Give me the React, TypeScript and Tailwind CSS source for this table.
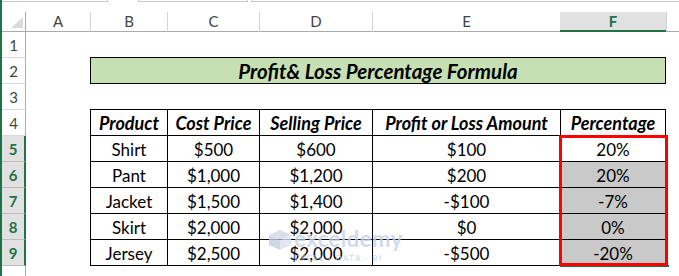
import React from 'react';

const cols = [
  { k: 'A', w: 64 },
  { k: 'B', w: 77 },
  { k: 'C', w: 92 },
  { k: 'D', w: 113 },
  { k: 'E', w: 188 },
  { k: 'F', w: 106 },
];

const widths = ['w-[77px]', 'w-[92px]', 'w-[113px]', 'w-[188px]', 'w-[106px]'];

const header = ['Product', 'Cost Price', 'Selling Price', 'Profit or Loss Amount', 'Percentage'];

const rows = [
  ['Shirt', '$500', '$600', '$100', '20%'],
  ['Pant', '$1,000', '$1,200', '$200', '20%'],
  ['Jacket', '$1,500', '$1,400', '-$100', '-7%'],
  ['Skirt', '$2,000', '$2,000', '$0', '0%'],
  ['Jersey', '$2,500', '$2,000', '-$500', '-20%'],
];

function RowHead({ n, active }: { n: number; active?: boolean }) {
  return active ? (
    <div className="w-[24px] h-full shrink-0 flex items-center justify-center bg-[#e1e1e1] border-b border-b-[#bdbdbd] border-r-2 border-r-[#217346] text-[#217346] font-bold text-[15px] pt-[2px]">
      {n}
    </div>
  ) : (
    <div className="w-[24px] h-full shrink-0 flex items-center justify-center border-b border-b-[#d9d9d9] border-r border-r-[#ababab] text-[#444] text-[15px] pt-[2px]">
      {n}
    </div>
  );
}

function Watermark() {
  return (
    <div className="absolute left-[268px] top-[229px] flex items-start gap-[2px] pointer-events-none opacity-80">
      <svg width="24" height="22" viewBox="0 0 24 22">
        <polygon points="12,1 23,6 12,11 1,6" fill="#cfd8ea" />
        <polygon points="1,6 12,11 12,21 1,16" fill="#c3cde3" />
        <polygon points="23,6 12,11 12,21 23,16" fill="#dbe2ef" />
      </svg>
      <div className="flex flex-col items-end leading-none">
        <span className="text-[22px] font-bold text-[#c6d1e8] tracking-[0.5px] -mt-[1px]">exceldemy</span>
        <span className="text-[8px] text-[#c7cdd6] tracking-[1.5px] mt-[4px] mr-[20px]">EXCEL · DATA · BI</span>
      </div>
    </div>
  );
}

export default function App() {
  return (
    <div className="relative w-[679px] h-[276px] overflow-hidden bg-white flex font-['Lato','Open_Sans',sans-serif] text-black">
      <div className="w-[2px] h-full bg-[#217346] shrink-0" />
      <div className="flex flex-col w-[677px]">
        {/* formula bar edges */}
        <div className="h-[12px] flex items-start">
          <div className="w-[106px] h-[2px] border-b border-r border-[#c8c8c8]" />
          <div className="w-[30px]" />
          <div className="w-[110px] h-[2px] border-b border-x border-[#c8c8c8]" />
          <div className="w-[3px]" />
          <div className="flex-1 h-[2px] border-b border-l border-[#c8c8c8]" />
        </div>

        {/* column headers */}
        <div className="h-[20px] flex">
          <div className="w-[24px] h-full shrink-0 border-r border-b border-[#ababab] flex items-end justify-end pr-[2px] pb-[3px]">
            <svg width="12" height="11" viewBox="0 0 12 11">
              <polygon points="12,0 12,11 0,11" fill="#dadada" />
            </svg>
          </div>
          {cols.map((c, i) =>
            c.k === 'F' ? (
              <div key={c.k} className="w-[106px] h-full shrink-0 bg-[#e1e1e1] border-b-2 border-[#217346] flex items-center justify-center text-[15px] font-bold text-[#217346]">
                F
              </div>
            ) : (
              <div
                key={c.k}
                className={`${i === 0 ? 'w-[64px]' : widths[i - 1]} h-full shrink-0 border-b border-b-[#ababab] ${i === 0 ? '' : 'border-l border-l-[#d4d4d4]'} flex items-center justify-center text-[15px] text-[#444]`}
              >
                {c.k}
              </div>
            )
          )}
          <div className="flex-1 h-full border-b border-b-[#ababab] border-l border-l-[#d4d4d4]" />
        </div>

        {/* row 1 */}
        <div className="h-[26px] flex">
          <RowHead n={1} />
          <div className="w-[64px] shrink-0" />
          <div className="w-[576px] shrink-0 border-b border-black" />
        </div>

        {/* row 2 title */}
        <div className="h-[26px] flex">
          <RowHead n={2} />
          <div className="w-[64px] shrink-0" />
          <div className="w-[576px] shrink-0 bg-[#c6e0b4] border-x border-b border-black flex items-center justify-center text-[20.5px] font-bold italic pt-[1px]">
            Profit&amp; Loss Percentage Formula
          </div>
        </div>

        {/* row 3 */}
        <div className="h-[26px] flex">
          <RowHead n={3} />
          <div className="w-[64px] shrink-0" />
          <div className="w-[576px] shrink-0 border-b border-black" />
        </div>

        {/* row 4 header */}
        <div className="h-[26px] flex">
          <RowHead n={4} />
          <div className="w-[64px] shrink-0" />
          {header.map((h, i) => (
            <div
              key={h}
              className={`${widths[i]} shrink-0 border-l border-b border-black ${i === 4 ? 'border-r' : ''} flex items-center justify-center text-[18px] font-bold italic pt-[1px] whitespace-nowrap`}
            >
              {h}
            </div>
          ))}
        </div>

        {rows.map((r, ri) => (
          <div key={ri} className="h-[26px] flex">
            <RowHead n={5 + ri} active />
            <div className="w-[64px] shrink-0" />
            {r.map((v, i) => (
              <div
                key={i}
                className={`${widths[i]} shrink-0 border-l border-b border-black ${i === 4 ? 'border-r' : ''} ${i === 4 && ri > 0 ? 'bg-[#c9c9c9]' : ''} flex items-center justify-center text-[17px] pt-[2px]`}
              >
                {v}
              </div>
            ))}
          </div>
        ))}

        {/* row 10 partial */}
        <div className="flex-1 flex">
          <div className="w-[24px] h-full border-r border-[#ababab]" />
        </div>
      </div>

      {/* selection */}
      <div className="absolute left-[560px] top-[265px] w-[109px] h-[2px] bg-[#217346]" />
      <div className="absolute left-[559px] top-[135px] w-[109px] h-[131px] border-[3px] border-[#ff0000]" />
      <Watermark />
    </div>
  );
}
